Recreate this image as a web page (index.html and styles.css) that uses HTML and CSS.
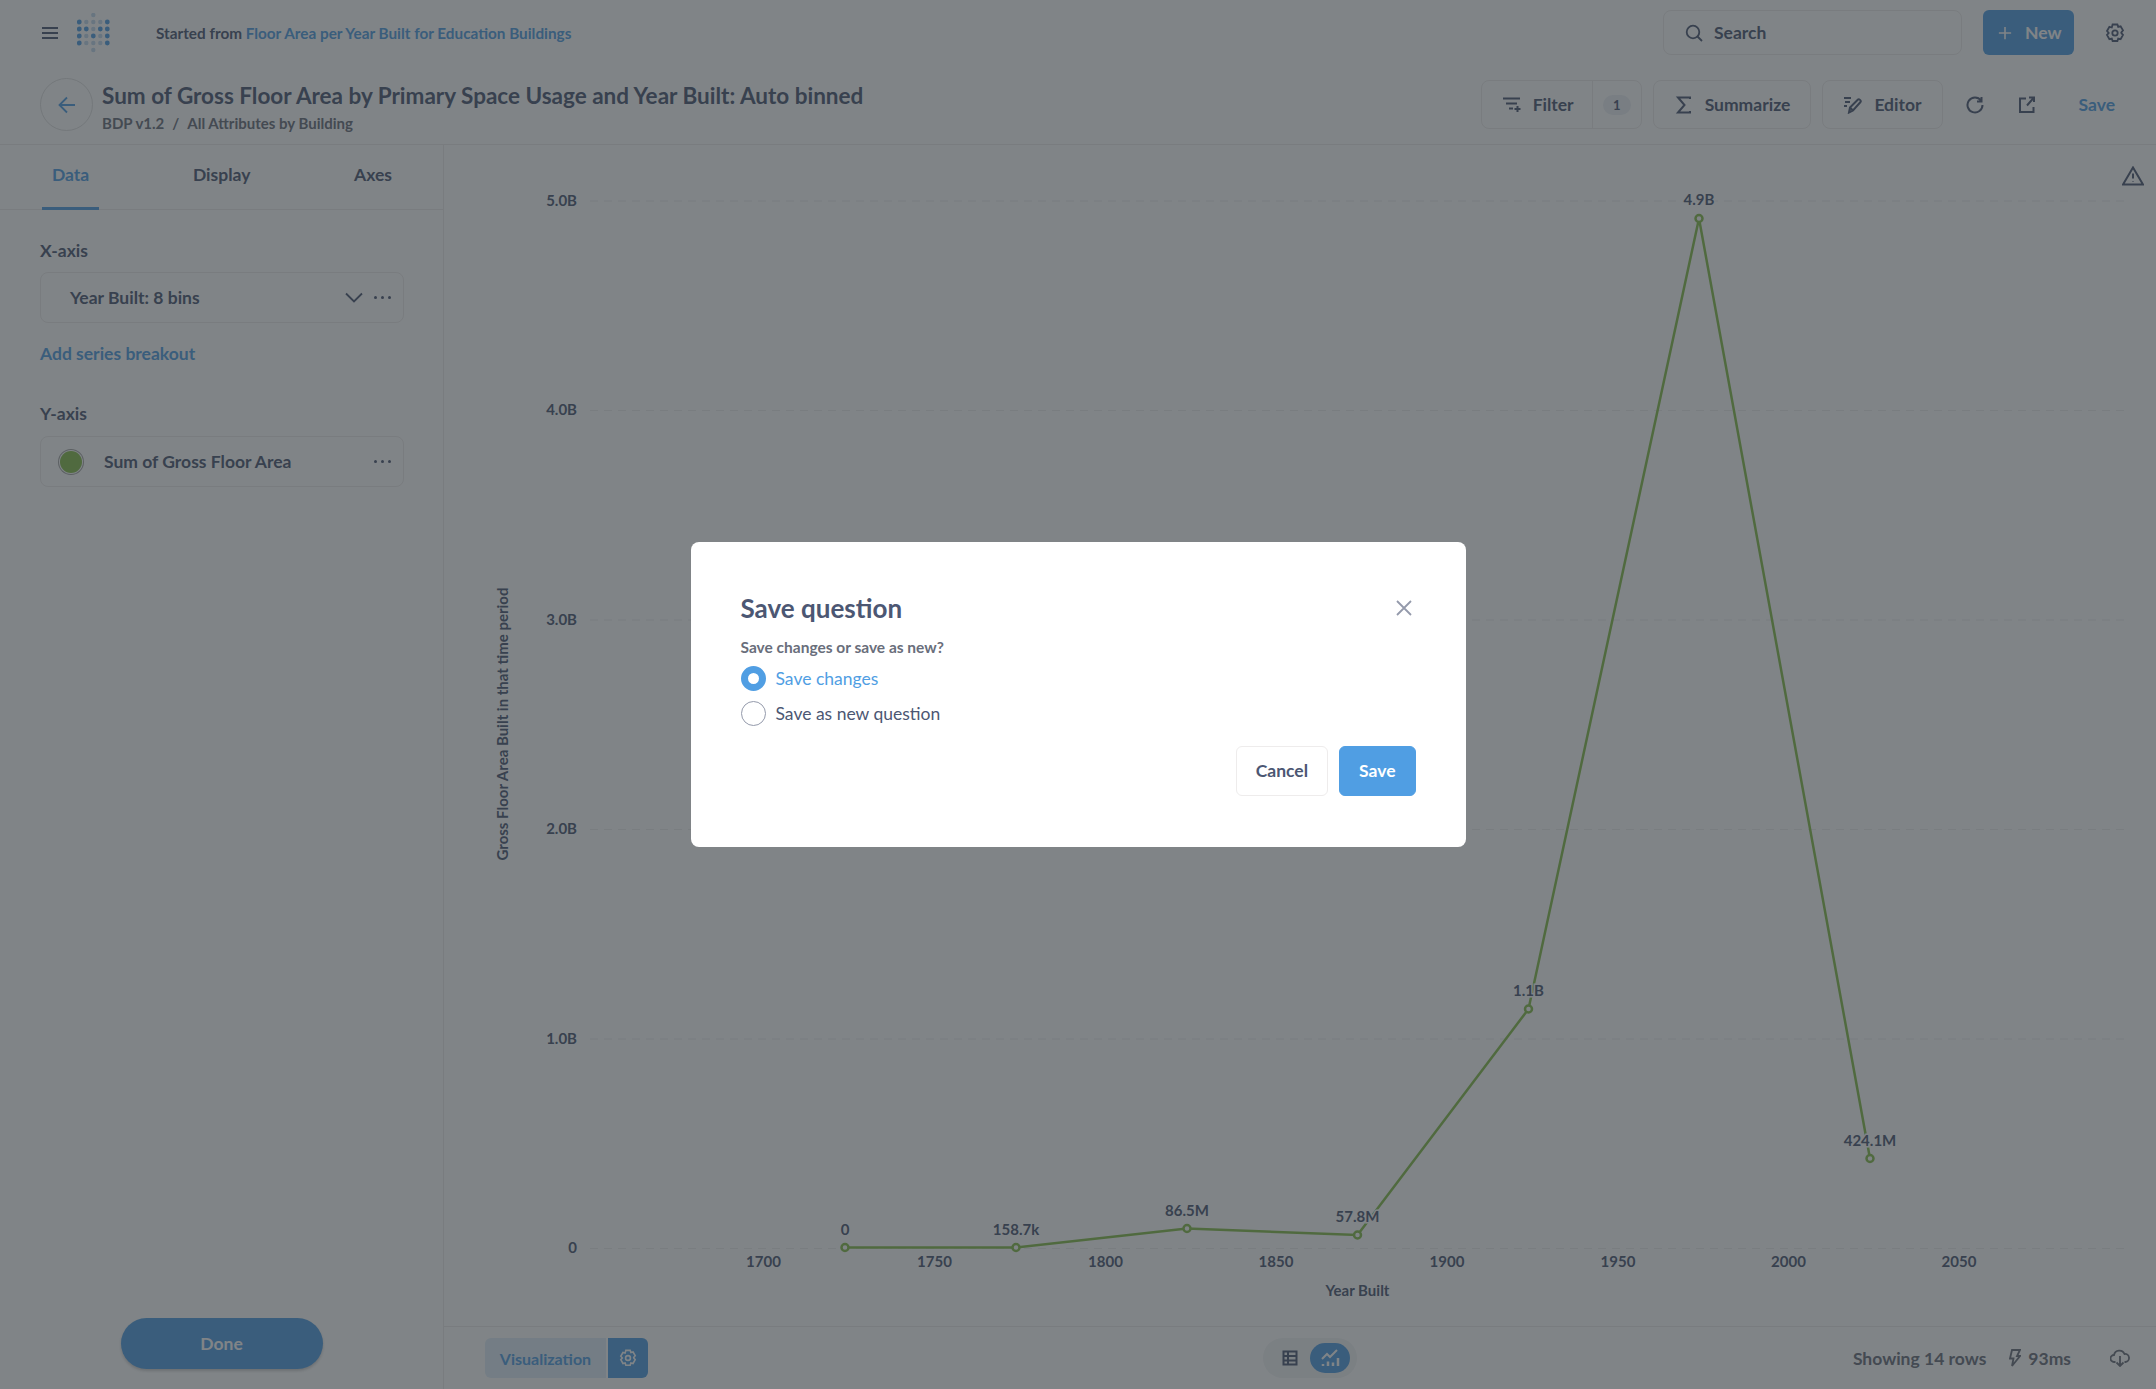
FILE: index.html
```html
<!DOCTYPE html>
<html lang="en">
<head>
    <meta charset="UTF-8">
    <title>Sum of Gross Floor Area by Primary Space Usage and Year Built: Auto binned</title>
    <link rel="stylesheet" href="styles.css">
</head>
<body>
    <div class="app">
        <header class="topbar">
            <svg class="menu-icon" viewBox="0 0 16 12"><path d="M0 1h16M0 6h16M0 11h16"/></svg>
            <svg class="logo" viewBox="0 0 34 40">
                <g class="logo-faint">
                    <circle cx="16.300" cy="2" r="2.200"/><circle cx="16.300" cy="37" r="2.200"/>
                    <circle cx="9.300" cy="9" r="2.200"/><circle cx="16.300" cy="9" r="2.200"/><circle cx="23.300" cy="9" r="2.200"/>
                    <circle cx="16.300" cy="16" r="2.200"/>
                    <circle cx="9.300" cy="23" r="2.200"/><circle cx="23.300" cy="23" r="2.200"/>
                    <circle cx="9.300" cy="30" r="2.200"/><circle cx="16.300" cy="30" r="2.200"/><circle cx="23.300" cy="30" r="2.200"/>
                </g>
                <g class="logo-dark">
                    <circle cx="2.300" cy="9" r="2.400"/><circle cx="30.300" cy="9" r="2.400"/>
                    <circle cx="2.300" cy="16" r="2.400"/><circle cx="9.300" cy="16" r="2.400"/><circle cx="23.300" cy="16" r="2.400"/><circle cx="30.300" cy="16" r="2.400"/>
                    <circle cx="2.300" cy="23" r="2.400"/><circle cx="16.300" cy="23" r="2.400"/><circle cx="30.300" cy="23" r="2.400"/>
                    <circle cx="2.300" cy="30" r="2.400"/><circle cx="30.300" cy="30" r="2.400"/>
                </g>
            </svg>
            <div class="started">Started from <a class="link">Floor Area per Year Built for Education Buildings</a></div>
            <div class="search">
                <svg class="icon" viewBox="0 0 18 18"><circle cx="8" cy="8" r="6.300"/><path d="M12.500 12.500l4.500 4.500"/></svg>
                <span>Search</span>
            </div>
            <div class="new-btn">
                <svg class="icon" viewBox="0 0 16 16"><path d="M8 1v14M1 8h14"/></svg>
                <span>New</span>
            </div>
            <svg class="icon gear" viewBox="0 0 20 20"><path d="M7.600 1.500h4.800l.8 2.400 2.400-.6 2.400 4.100-1.700 2 .1.600 1.600 1.900-2.400 4.200-2.400-.6-.8 2.500H7.600l-.8-2.500-2.400.6L2 11.900l1.700-1.900-1.700-2 2.400-4.100 2.400.6z"/><circle cx="10" cy="10" r="2.700"/></svg>
        </header>

        <div class="titlebar">
            <div class="back">
                <svg class="icon" viewBox="0 0 18 18"><path d="M17 9H2M9 1.500L1.500 9 9 16.500"/></svg>
            </div>
            <div class="title-text">
                <h1>Sum of Gross Floor Area by Primary Space Usage and Year Built: Auto binned</h1>
                <div class="crumbs"><span>BDP v1.2</span><span class="slash">/</span><span>All Attributes by Building</span></div>
            </div>
            <div class="actions">
                <div class="action-group">
                    <div class="action">
                        <svg class="icon" viewBox="0 0 20 18"><path d="M1 2.500h17M4 7.500h11M7 12.500h4M15.500 10v6M12.500 13h6"/></svg>
                        <span>Filter</span>
                    </div>
                    <div class="action-count"><span class="count">1</span></div>
                </div>
                <div class="action">
                    <svg class="icon" viewBox="0 0 16 18"><path d="M14 3V1.500H2L8.500 9 2 16.500h12V15"/></svg>
                    <span>Summarize</span>
                </div>
                <div class="action">
                    <svg class="icon" viewBox="0 0 20 18"><path d="M1 2h7M2 6h5M1 10h3M6 16.500l1-5L15 3.500c1-1 3.500 1.200 2.500 2.500L10 14.500zM7 11.500l3 3"/></svg>
                    <span>Editor</span>
                </div>
                <svg class="icon tool" viewBox="0 0 18 18"><path d="M15 4.500A7.500 7.500 0 1 0 16.500 9M15.500 1v4.500H11"/></svg>
                <svg class="icon tool share" viewBox="0 0 18 18"><path d="M8 2.500H2v13.500h13.500V11M9 9.500l7-8M11 1.500h5V6"/></svg>
                <a class="link save-link">Save</a>
            </div>
        </div>

        <div class="workspace">
            <aside class="sidebar">
                <nav class="tabs">
                    <div class="tab active">Data</div>
                    <div class="tab">Display</div>
                    <div class="tab">Axes</div>
                </nav>
                <div class="settings">
                    <div class="field-label">X-axis</div>
                    <div class="field-box xfield">
                        <span class="field-name">Year Built: 8 bins</span>
                        <svg class="icon chevron" viewBox="0 0 18 11"><path d="M1 1.500l8 8 8-8"/></svg>
                        <span class="dots"><i></i><i></i><i></i></span>
                    </div>
                    <a class="link add-breakout">Add series breakout</a>
                    <div class="field-label">Y-axis</div>
                    <div class="field-box yfield">
                        <span class="swatch"></span>
                        <span class="field-name">Sum of Gross Floor Area</span>
                        <span class="dots"><i></i><i></i><i></i></span>
                    </div>
                </div>
                <div class="done-row"><div class="done-btn">Done</div></div>
            </aside>

            <main class="main">
                <div class="chart">
                    <svg class="chart-svg" viewBox="444 145 1712 1181">
                        <g class="grid">
                            <path d="M590 201H2130M590 410.500H2130M590 620H2130M590 829.500H2130M590 1039H2130M590 1248.500H2130"/>
                        </g>
                        <g class="tick y-tick">
                            <text x="577" y="206">5.0B</text>
                            <text x="577" y="415">4.0B</text>
                            <text x="577" y="625">3.0B</text>
                            <text x="577" y="834">2.0B</text>
                            <text x="577" y="1044">1.0B</text>
                            <text x="577" y="1253">0</text>
                        </g>
                        <g class="tick x-tick">
                            <text x="763.500" y="1267">1700</text>
                            <text x="934.500" y="1267">1750</text>
                            <text x="1105.500" y="1267">1800</text>
                            <text x="1276" y="1267">1850</text>
                            <text x="1447" y="1267">1900</text>
                            <text x="1618" y="1267">1950</text>
                            <text x="1788.500" y="1267">2000</text>
                            <text x="1959" y="1267">2050</text>
                        </g>
                        <text class="axis-name" x="1357.500" y="1296">Year Built</text>
                        <text class="axis-name" transform="translate(508 724) rotate(-90)">Gross Floor Area Built in that time period</text>
                        <polyline class="series" points="845,1247.500 1016,1247.500 1187,1228.500 1357.500,1235 1528.500,1009 1699,218.500 1870,1158.500"/>
                        <g class="points">
                            <circle cx="845" cy="1247.500" r="3.500"/>
                            <circle cx="1016" cy="1247.500" r="3.500"/>
                            <circle cx="1187" cy="1228.500" r="3.500"/>
                            <circle cx="1357.500" cy="1235" r="3.500"/>
                            <circle cx="1528.500" cy="1009" r="3.500"/>
                            <circle cx="1699" cy="218.500" r="3.500"/>
                            <circle cx="1870" cy="1158.500" r="3.500"/>
                        </g>
                        <g class="data-label">
                            <text x="845" y="1235">0</text>
                            <text x="1016" y="1235">158.7k</text>
                            <text x="1187" y="1216">86.5M</text>
                            <text x="1357.500" y="1222">57.8M</text>
                            <text x="1528.500" y="996">1.1B</text>
                            <text x="1699" y="205">4.9B</text>
                            <text x="1870" y="1146">424.1M</text>
                        </g>
                    </svg>
                    <svg class="icon warning" viewBox="0 0 22 20"><path d="M11 1.500L1 18.500h20zM11 7.500v5M11 15v.5"/></svg>
                </div>
                <footer class="footbar">
                    <div class="viz-group">
                        <div class="viz-label">Visualization</div>
                        <div class="viz-gear">
                            <svg class="icon" viewBox="0 0 20 20"><path d="M7.600 1.500h4.800l.8 2.400 2.400-.6 2.400 4.100-1.700 2 .1.600 1.600 1.900-2.400 4.200-2.400-.6-.8 2.500H7.600l-.8-2.500-2.400.6L2 11.900l1.700-1.900-1.700-2 2.400-4.100 2.400.6z"/><circle cx="10" cy="10" r="2.700"/></svg>
                        </div>
                    </div>
                    <div class="toggle">
                        <span class="toggle-item">
                            <svg class="icon" viewBox="0 0 16 16"><path d="M1.500 1.500h13v13h-13zM1.500 6h13M1.500 10.500h13M6 1.500v13"/></svg>
                        </span>
                        <span class="toggle-item on">
                            <svg class="icon" viewBox="0 0 20 18"><path d="M2 10l5-5 3 3 7-7"/><path class="bars" d="M3 15v2M8 12.500v4.500M13 13.500v3.500M18 9v8"/></svg>
                        </span>
                    </div>
                    <div class="foot-info">
                        <span>Showing 14 rows</span>
                        <span class="timing">
                            <svg class="icon" viewBox="0 0 12 18"><path d="M3 1h8L8 7h3L3 17l1.500-7.500H1z"/></svg>
                            93ms
                        </span>
                        <svg class="icon cloud" viewBox="0 0 20 18"><path d="M5.500 13H4a3.500 3.500 0 0 1 0-7 5.500 5.500 0 0 1 10.500-1 4 4 0 0 1 1 8h-1M10 7v10M6.500 13.500L10 17l3.500-3.500"/></svg>
                    </div>
                </footer>
            </main>
        </div>
    </div>

    <div class="overlay">
        <div class="modal">
            <div class="modal-head">
                <h2>Save question</h2>
                <svg class="icon close" viewBox="0 0 16 16"><path d="M1 1l14 14M15 1L1 15"/></svg>
            </div>
            <div class="question">Save changes or save as new?</div>
            <div class="radio checked"><span class="dot"></span>Save changes</div>
            <div class="radio"><span class="dot"></span>Save as new question</div>
            <div class="modal-foot">
                <div class="btn">Cancel</div>
                <div class="btn primary">Save</div>
            </div>
        </div>
    </div>
</body>
</html>
```

FILE: styles.css
```css
* {
    box-sizing: border-box;
}
body {
    margin: 0;
    height: 1389px;
    overflow: hidden;
    background: white;
    font-family: 'Lato', 'Noto Sans', sans-serif;
    font-weight: 700;
    font-size: 17.5px;
    color: #4c5773;
}
.icon {
    fill: none;
    stroke: #4c5773;
    stroke-width: 1.800;
    flex: none;
}
.link {
    color: #509ee3;
    text-decoration: none;
}
.app {
    display: flex;
    flex-direction: column;
    height: 100%;
}

/* top bar */
.topbar {
    display: flex;
    align-items: center;
    height: 65px;
    padding: 0 31px 0 42px;
}
.menu-icon {
    width: 16px;
    height: 12px;
    fill: none;
    stroke: #4c5773;
    stroke-width: 2;
}
.logo {
    width: 34px;
    height: 40px;
    margin-left: 19px;
}
.logo-faint {
    fill: #c2d9ee;
}
.logo-dark {
    fill: #509ee3;
}
.started {
    margin-left: 45px;
    font-size: 15.300px;
    flex: 1;
}
.search {
    display: flex;
    align-items: center;
    gap: 11px;
    width: 299px;
    height: 45px;
    padding-left: 21px;
    border: 1px solid #eeecec;
    border-radius: 8px;
}
.search .icon {
    width: 18px;
    height: 18px;
}
.new-btn {
    display: flex;
    align-items: center;
    gap: 13px;
    width: 91px;
    height: 45px;
    margin-left: 21px;
    padding-left: 15px;
    background: #509ee3;
    border-radius: 6px;
    color: white;
}
.new-btn .icon {
    width: 14px;
    height: 14px;
    stroke: white;
}
.gear {
    width: 20px;
    height: 20px;
    margin-left: 31px;
}

/* title bar */
.titlebar {
    display: flex;
    align-items: center;
    height: 80px;
    padding: 0 41px 0 40px;
    border-bottom: 1px solid #eeecec;
}
.back {
    display: flex;
    align-items: center;
    justify-content: center;
    width: 53px;
    height: 53px;
    border: 1px solid #e0e0e0;
    border-radius: 50%;
}
.back .icon {
    width: 18px;
    height: 18px;
    stroke: #509ee3;
}
.title-text {
    margin-left: 9px;
    padding-top: 4px;
    flex: 1;
}
h1 {
    margin: 0;
    font-size: 22.500px;
    line-height: 28px;
    font-weight: 700;
}
.crumbs {
    margin-top: 4px;
    display: flex;
    gap: 8px;
    font-size: 15px;
    line-height: 18px;
    color: #696e7b;
}
.actions {
    display: flex;
    align-items: center;
    gap: 11px;
}
.action-group {
    display: flex;
    border: 1px solid #eeecec;
    border-radius: 8px;
    height: 49px;
}
.action {
    display: flex;
    align-items: center;
    gap: 11px;
    height: 49px;
    padding: 0 20px;
    border: 1px solid #eeecec;
    border-radius: 8px;
}
.action .icon {
    width: 20px;
    height: 18px;
    stroke-width: 2;
}
.action-group .action {
    border: 0;
    height: 47px;
    width: 110px;
}
.action-count {
    display: flex;
    align-items: center;
    justify-content: center;
    width: 49px;
    border-left: 1px solid #eeecec;
}
.count {
    width: 28px;
    height: 20px;
    line-height: 20px;
    text-align: center;
    font-size: 13px;
    background: #edf0f5;
    border-radius: 10px;
}
.tool {
    width: 18px;
    height: 18px;
    margin-left: 12px;
    stroke-width: 2;
}
.share {
    margin-left: 23px;
}
.save-link {
    margin-left: 32px;
}

/* sidebar */
.workspace {
    display: flex;
    flex: 1;
    min-height: 0;
}
.sidebar {
    display: flex;
    flex-direction: column;
    width: 444px;
    border-right: 1px solid #eeecec;
}
.tabs {
    display: flex;
    justify-content: space-between;
    height: 65px;
    padding: 0 41px 0 42px;
    border-bottom: 1px solid #eeecec;
}
.tab {
    height: 65px;
    padding: 19px 10px 0;
    min-width: 57px;
    text-align: center;
}
.tab.active {
    color: #509ee3;
    border-bottom: 3px solid #509ee3;
}
.settings {
    display: flex;
    flex-direction: column;
    flex: 1;
    padding: 31px 39px 0 40px;
}
.field-label {
    line-height: 20px;
}
.field-box {
    display: flex;
    align-items: center;
    height: 51px;
    margin-top: 11px;
    padding-right: 12px;
    border: 1px solid #eeecec;
    border-radius: 8px;
}
.xfield {
    padding-left: 29px;
}
.yfield {
    margin-top: 12px;
    padding-left: 19px;
}
.field-name {
    flex: 1;
}
.chevron {
    width: 18px;
    height: 11px;
    margin-right: 11px;
}
.dots {
    display: flex;
    gap: 4px;
    margin-top: -1px;
}
.dots i {
    width: 3px;
    height: 3px;
    border-radius: 50%;
    background: #4c5773;
}
.swatch {
    width: 22px;
    height: 22px;
    margin-right: 22px;
    border-radius: 50%;
    background: #88bf4d;
    box-shadow: 0 0 0 1px white, 0 0 0 2px #a5a5a5;
}
.add-breakout {
    margin: 21px 0 40px;
    line-height: 20px;
}
.done-row {
    display: flex;
    justify-content: center;
    padding-bottom: 20px;
}
.done-btn {
    width: 202px;
    height: 51px;
    line-height: 51px;
    text-align: center;
    color: white;
    background: #509ee3;
    border-radius: 26px;
    box-shadow: 0 2px 3px rgba(0, 0, 0, 0.2);
}

/* chart */
.main {
    display: flex;
    flex-direction: column;
    flex: 1;
    min-width: 0;
}
.chart {
    position: relative;
    flex: 1;
    min-height: 0;
}
.chart-svg {
    display: block;
    width: 100%;
    height: 100%;
}
.grid path {
    fill: none;
    stroke: #ededee;
    stroke-width: 1;
    stroke-dasharray: 8 6;
}
.tick text, .axis-name, .data-label text {
    font-family: 'Lato', sans-serif;
    font-weight: 700;
    font-size: 15px;
    fill: #4c5773;
}
.y-tick text {
    text-anchor: end;
}
.x-tick text, .axis-name, .data-label text {
    text-anchor: middle;
}
.data-label text {
    stroke: white;
    stroke-width: 3px;
    paint-order: stroke;
}
.series {
    fill: none;
    stroke: #88bf4d;
    stroke-width: 2.500;
}
.points circle {
    fill: white;
    stroke: #88bf4d;
    stroke-width: 2.500;
}
.warning {
    position: absolute;
    top: 21px;
    right: 12px;
    width: 22px;
    height: 20px;
    stroke-width: 2;
}

/* footer */
.footbar {
    position: relative;
    display: flex;
    align-items: center;
    height: 63px;
    padding: 0 26px 0 41px;
    border-top: 1px solid #eeecec;
}
.viz-group {
    display: flex;
    gap: 2px;
    height: 40px;
}
.viz-label {
    width: 121px;
    line-height: 42px;
    font-size: 16px;
    text-align: center;
    color: #509ee3;
    background: #e0eefa;
    border-radius: 6px 0 0 6px;
}
.viz-gear {
    display: flex;
    align-items: center;
    justify-content: center;
    width: 40px;
    background: #509ee3;
    border-radius: 0 6px 6px 0;
}
.viz-gear .icon {
    width: 18px;
    height: 18px;
    stroke: white;
}
.toggle {
    display: flex;
    align-items: center;
    gap: 2px;
    margin-left: 615px;
    padding: 0 7px 0 9px;
    width: 94px;
    height: 40px;
    background: #f3f4f5;
    border-radius: 20px;
}
.toggle-item {
    display: flex;
    align-items: center;
    justify-content: center;
    width: 36px;
    height: 30px;
    border-radius: 15px;
}
.toggle-item .icon {
    width: 16px;
    height: 16px;
    stroke-width: 2;
}
.toggle-item.on {
    width: 40px;
    background: #509ee3;
}
.toggle-item.on .icon {
    width: 20px;
    height: 18px;
    stroke: white;
}
.bars {
    stroke-width: 2.500;
}
.foot-info {
    display: flex;
    align-items: center;
    margin-left: auto;
    gap: 23px;
    color: #696e7b;
}
.timing {
    display: flex;
    align-items: center;
    gap: 7px;
}
.timing .icon {
    width: 12px;
    height: 18px;
    stroke: #696e7b;
}
.cloud {
    width: 20px;
    height: 18px;
    margin-left: 16px;
    stroke: #696e7b;
}

/* modal */
.overlay {
    position: fixed;
    inset: 0;
    z-index: 10;
    display: flex;
    align-items: center;
    justify-content: center;
    background: rgba(43, 50, 55, 0.6);
}
.modal {
    width: 775px;
    height: 305px;
    padding: 50px 50px 0;
    background: white;
    border-radius: 8px;
}
.modal-head {
    display: flex;
    align-items: center;
    justify-content: space-between;
    padding-right: 4px;
}
h2 {
    margin: 0;
    font-size: 26px;
    line-height: 32px;
    font-weight: 700;
}
.close {
    width: 16px;
    height: 16px;
    stroke: #949aab;
}
.question {
    margin-top: 14px;
    font-size: 15.500px;
    line-height: 18px;
    color: #696e7b;
}
.radio {
    display: flex;
    align-items: center;
    gap: 10px;
    height: 25px;
    margin-top: 10px;
    font-weight: 400;
}
.dot {
    width: 25px;
    height: 25px;
    border: 1px solid #949aab;
    border-radius: 50%;
}
.radio.checked {
    color: #509ee3;
}
.checked .dot {
    border: 7px solid #509ee3;
}
.modal-foot {
    display: flex;
    justify-content: flex-end;
    gap: 11px;
    margin-top: 20px;
}
.btn {
    height: 50px;
    line-height: 48px;
    padding: 0 19px;
    border: 1px solid #eeecec;
    border-radius: 6px;
}
.btn.primary {
    color: white;
    background: #509ee3;
    border-color: #509ee3;
}
```
